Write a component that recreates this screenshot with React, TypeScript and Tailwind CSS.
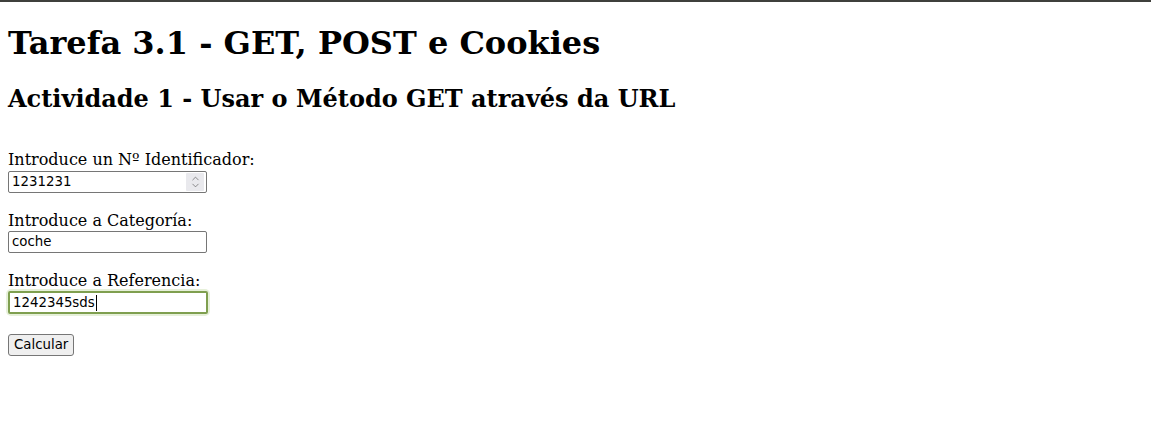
import { ChevronUp, ChevronDown } from 'lucide-react';

const serif = { fontFamily: '"DejaVu Serif", serif' };

function Field({ label, children, top }: { label: string; children: React.ReactNode; top: string }) {
  return (
    <div className={top}>
      <div className="text-[16px] leading-[19px] text-black" style={serif}>{label}</div>
      {children}
    </div>
  );
}

export default function App() {
  return (
    <div className="min-h-[440px] w-[1151px] bg-white border-t-2 border-[#3f403c] font-['DejaVu_Sans',sans-serif]">
      <div className="px-2">
        <h1 className="pt-[23px] text-[32px] leading-[37px] font-bold text-black font-['DejaVu_Serif',serif]">
          Tarefa 3.1 - GET, POST e Cookies
        </h1>
        <h2 className="mt-[23px] text-[24px] leading-[28px] font-bold text-black font-['DejaVu_Serif',serif]">
          Actividade 1 - Usar o Método GET através da URL
        </h2>

        <form className="flex flex-col items-start">
          <Field label="Introduce un Nº Identificador:" top="mt-[37px]">
            <div className="mt-[2px] flex h-[22px] w-[199px] items-center rounded-[2px] border border-[#767676] bg-white pl-[3px] pr-[2px] text-[13.33px]">
              <span className="flex-1 text-black">1231231</span>
              <span className="flex h-[18px] w-[18px] flex-col items-center justify-center rounded-[1px] bg-[#e9e9ed] text-[#5f5f5f]">
                <ChevronUp size={11} strokeWidth={1.5} className="-mb-[2px]" />
                <ChevronDown size={11} strokeWidth={1.5} className="-mt-[2px]" />
              </span>
            </div>
          </Field>

          <Field label="Introduce a Categoría:" top="mt-[18px]">
            <div className="mt-[1px] flex h-[22px] w-[199px] items-center rounded-[2px] border border-[#767676] bg-white pl-[3px] text-[13.33px] text-black">
              coche
            </div>
          </Field>

          <Field label="Introduce a Referencia:" top="mt-[18px]">
            <div className="mt-[1px] rounded-[3px] shadow-[0_0_0_2px_#e6f0d9]">
              <div className="flex h-[23px] w-[200px] items-center rounded-[2px] border-2 border-[#7f9f4f] bg-white pl-[3px] text-[13.33px] text-black">
                1242345sds
                <span className="ml-[1px] inline-block h-[16px] w-[1px] bg-black" />
              </div>
            </div>
          </Field>

          <button
            type="button"
            className="mt-[20px] h-[22px] rounded-[3px] border border-[#767676] bg-[#efefef] px-[5px] text-[13.33px] leading-[18px] text-black"
          >
            Calcular
          </button>
        </form>
      </div>
    </div>
  );
}
